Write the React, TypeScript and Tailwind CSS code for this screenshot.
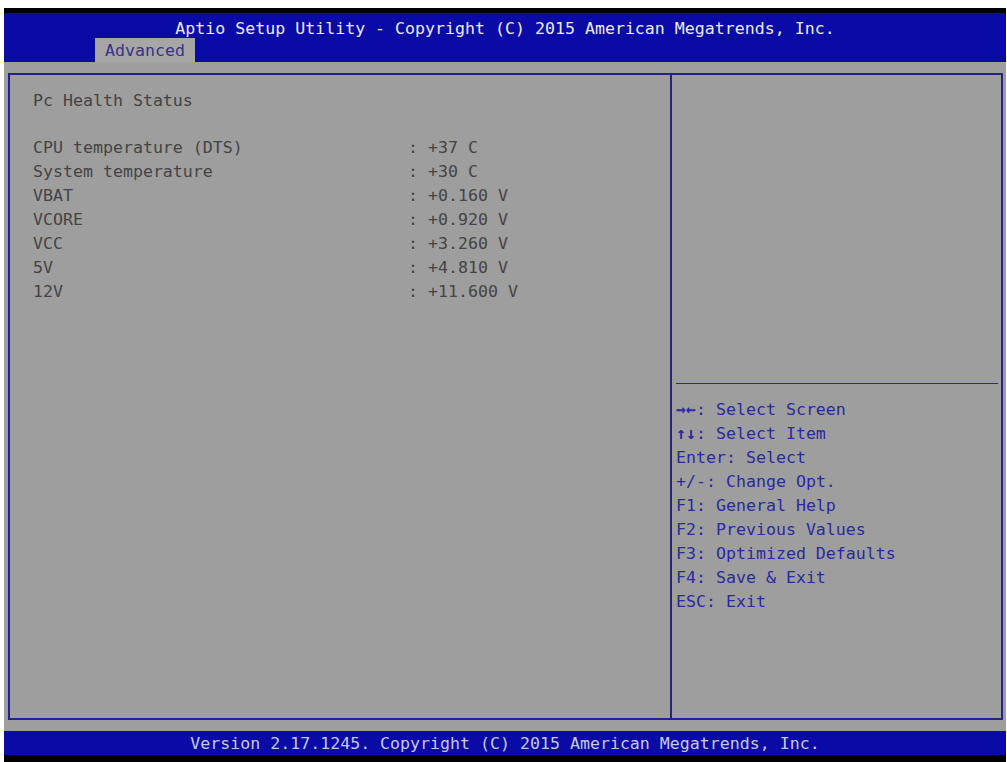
import React from "react";

const rows: [string, string][] = [
    ["CPU temperature (DTS)", ": +37 C"],
    ["System temperature", ": +30 C"],
    ["VBAT", ": +0.160 V"],
    ["VCORE", ": +0.920 V"],
    ["VCC", ": +3.260 V"],
    ["5V", ": +4.810 V"],
    ["12V", ": +11.600 V"],
];

const help: [string, string, boolean][] = [
    ["→←", ": Select Screen", true],
    ["↑↓", ": Select Item", true],
    ["Enter", ": Select", false],
    ["+/-", ": Change Opt.", false],
    ["F1", ": General Help", false],
    ["F2", ": Previous Values", false],
    ["F3", ": Optimized Defaults", false],
    ["F4", ": Save & Exit", false],
    ["ESC", ": Exit", false],
];

export default function App() {
    return (
        <div
            className="w-[1007px] h-[762px] bg-white flex flex-col pt-[8px] pl-[4px] pr-[1px] text-[16.6px] leading-[24px]"
            style={{fontFamily: '"DejaVu Sans Mono", "Liberation Mono", monospace'}}
        >
            <div className="border-t-[5px] border-black bg-[#0a0aa6] h-[54px] flex flex-col">
                <div className="h-[25px] pt-[6px] leading-[19px] text-center text-[#ececf4] whitespace-pre">
                    Aptio Setup Utility - Copyright (C) 2015 American Megatrends, Inc.
                </div>
                <div className="h-[24px] w-[100px] ml-[91px] bg-[#a6a6a6] px-[10px] pt-[1px] leading-[23px] text-[#34348a] whitespace-pre">
                    Advanced
                </div>
            </div>

            <div className="flex-1 bg-[#9e9e9e] pt-[11px] pb-[11px] pl-[4px] pr-[3px]">
                <div className="h-[647px] border-2 border-[#22228a] flex">
                    <div className="w-[660px] pl-[23px] pt-[14px] text-[#444444] whitespace-pre">
                        <div>Pc Health Status</div>
                        <div className="mt-[23px]">
                            {rows.map(([label, value]) => (
                                <div key={label} className="flex">
                                    <span className="w-[375px]">{label}</span>
                                    <span>{value}</span>
                                </div>
                            ))}
                        </div>
                    </div>
                    <div className="flex-1 border-l-2 border-[#22228a] pl-[4px] pr-[3px] flex flex-col">
                        <div className="h-[309px] border-b border-[#2a2a88]"></div>
                        <div className="pt-[14px] text-[#2a2aa0] whitespace-pre">
                            {help.map(([key, text, arrow]) => (
                                <div key={key}>
                                    <span className={arrow ? "font-bold" : ""}>{key}</span>{text}
                                </div>
                            ))}
                        </div>
                    </div>
                </div>
            </div>

            <div className="h-[31px] border-b-[7px] border-black bg-[#0a0aa6] pt-[2px] leading-[22px] text-center text-[#c8c8e8] whitespace-pre">
                Version 2.17.1245. Copyright (C) 2015 American Megatrends, Inc.
            </div>
        </div>
    );
}
